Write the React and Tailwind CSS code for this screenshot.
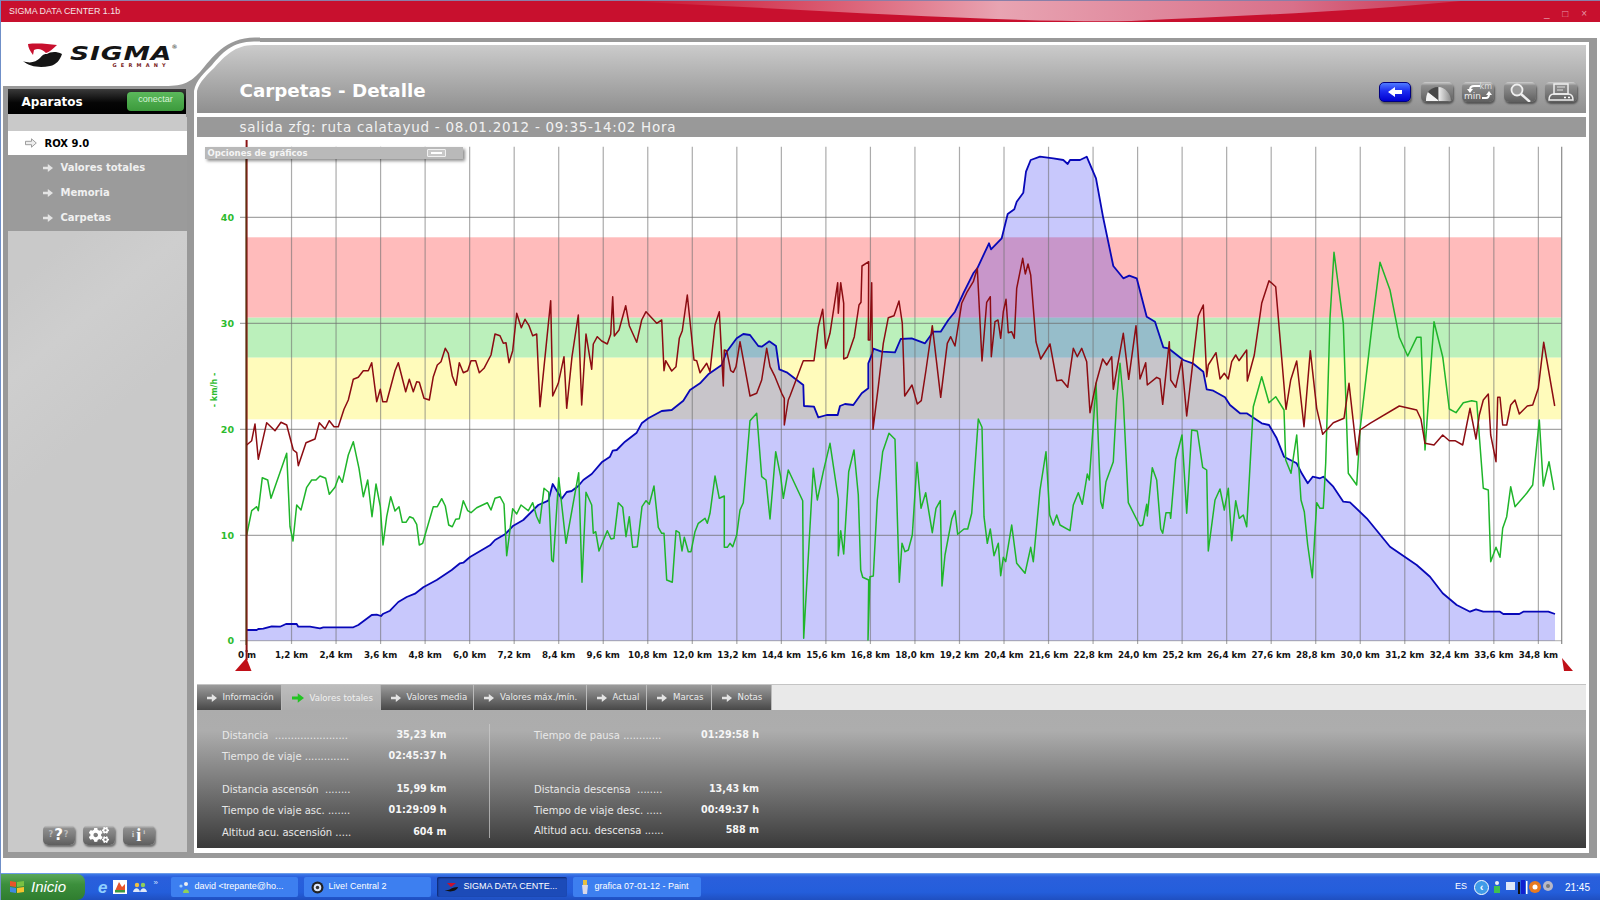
import React from "react";
import { FaCogs } from "react-icons/fa";

const parse = (ox, oy, s) =>
  s.trim().split(/\s+/).map((p) => {
    const [x, y] = p.split(",").map(Number);
    return [ox + x / 3, oy + y / 3];
  });
const toPts = (a) => a.map(([x, y]) => `${x.toFixed(1)},${y.toFixed(1)}`).join(" ");

const blue = [
  ...parse(200, 400, "140,690 170,690 175,687 190,686 215,679 240,680 258,672 290,672 295,680 330,680 360,685 370,682 460,682 475,675 495,660 515,645 530,644 543,648 550,641 570,632 595,606 620,591 645,581 670,562 710,540 755,510 780,490 790,488 810,471 870,436 885,420 915,403 940,377 970,360 1015,315 1045,302 1058,252 1085,296 1100,276 1115,273 1135,258 1150,240 1175,222 1205,187 1230,170 1238,152 1250,150 1275,125 1310,98 1325,70 1345,55 1385,33 1415,30 1450,2"),
  ...parse(690, 140, "0,750 30,730 55,703 95,675 110,635 140,595 160,582 180,585 205,618 215,620 238,604 258,618 268,688 290,697 340,735 342,798 372,800 385,832 410,825 443,825 450,798 465,792 490,795 515,760 535,745 535,670 547,640 550,626 575,635 615,637 632,597 665,595 705,610 730,575 752,575 775,540 795,515 820,460 850,400 862,385 897,310 903,328 935,295 953,222 973,208 980,185 1000,158 1008,95 1022,60 1050,50 1090,55 1120,60 1133,72 1140,60 1170,60 1190,50 1205,85 1218,115 1240,235 1270,378 1300,415 1318,407 1340,415 1370,530 1395,545 1420,622 1435,625 1480,660"),
  ...parse(1120, 230, "218,400 250,425 260,478 280,482 315,502 330,525 360,550 380,550 425,580 447,585 470,625 492,680 530,700"),
  ...parse(1120, 430, "545,130 563,160 578,140 600,145 610,140 640,170 670,215 690,217 740,265 810,350 890,405 930,440 968,490 1010,525 1050,545 1068,538 1090,545 1140,545 1150,552 1198,552 1210,545 1285,545 1305,552"),
];

const green = [
  ...parse(200, 400, "140,405 155,332 170,320 175,332 187,233 203,240 213,295 260,160 270,380 279,423 290,315 303,330 320,262 335,240 348,240 360,228 377,235 388,283 405,262 417,228 427,247 445,165 460,125 477,205 490,290 503,240 516,350 528,252 541,320 549,435 560,350 572,290 585,333 597,320 607,367 618,367 629,350 640,355 650,373 658,435 668,430 678,395 700,320 712,320 725,296 736,318 746,375 757,380 767,358 778,356 790,302 803,332 813,338 830,323 862,308 873,330 885,295 900,290 912,312 920,467 938,326 950,342 963,315 985,332 998,308 1010,350 1019,370 1032,265 1046,277 1055,480 1060,485 1076,233 1098,430 1136,218 1146,547 1158,277 1175,315 1180,400 1187,395 1197,453 1222,392 1233,417 1242,415 1255,308 1268,322 1278,410 1288,350 1298,442 1312,440 1326,320 1338,302 1348,313 1362,258 1375,382 1385,400 1392,400 1400,540 1417,547 1428,392 1438,398 1446,453 1453,412 1465,455 1473,455"),
  ...parse(690, 400, "15,395 25,370 45,355 52,370 60,340 75,228 88,295 103,288 103,442 112,442 120,430 128,440 140,405 150,330 160,308 180,62 200,40 215,230 228,240 240,357 257,155 272,230 280,295 295,210 338,302 341,715 370,205 382,300 400,215 420,130 445,297 445,467 452,392 461,462 476,215 492,150 505,285 512,510 518,532 536,540 534,720 540,530 550,528 562,300 578,155 597,100 615,118 628,547 636,430 645,455 655,450 667,405 681,187 693,325 707,278 727,398 738,325 751,302 756,558 765,465 785,358 795,332 803,403 822,387 833,387 845,340 865,57 876,82 882,350 892,430 901,387 912,467 925,430 932,527 940,472 947,485 965,375 980,490 1005,520 1022,442 1030,485 1050,270 1068,155 1079,345 1090,375 1100,345 1110,375 1140,392 1150,315 1165,278 1177,313 1192,222 1198,240 1215,0 1218,-50 1220,0 1232,305 1238,325 1248,245 1270,185 1280,0 1290,-110 1300,0"),
  ...parse(1120, 430, "25,218 60,288 68,285 80,223 82,258 97,113 110,150 122,297 128,310 138,248 150,248 152,265 167,88 186,15 200,250 215,0 232,3 248,112 260,120 265,363 285,210 300,177 313,240 325,175 335,332 347,212 358,265 370,255 380,290 400,-70 425,-160 447,-82 467,-100 492,-60 497,90 513,130 530,15 543,210 553,245 563,345 577,443 590,218 600,235 610,235 617,100 630,-335 642,-533 670,-320 685,130 710,165 720,0 757,-320 780,-503 810,-420 838,-278 863,-222 890,-278 903,-278 915,60 942,-325 968,-220 988,-63 1008,-52 1030,-82 1055,-88 1070,-85 1090,175 1105,180 1112,395 1128,352 1140,382 1148,295 1160,260 1172,170 1185,230 1220,190 1238,165 1258,-30 1270,168 1287,95 1302,180"),
];

const red = [
  ...parse(200, 400, "140,135 155,122 165,72 175,178 200,68 225,92 243,67 260,75 280,150 290,158 295,197 318,128 345,117 358,68 375,87 388,62 402,80 415,80"),
  ...parse(200, 140, "432,808 445,780 460,718 475,712 490,692 505,692 515,668 530,785 541,748 548,785 560,785 585,692 595,668 617,755 628,718 640,755 650,725 658,727 672,775 688,780 700,710 712,675 723,665 736,625 745,640 757,708 768,736 778,668 790,698 803,692 813,662 827,662 838,698 852,685 873,645 885,582 900,587 910,610 918,608 927,668 938,632 950,520 964,563 975,538 987,557 998,587 1010,582 1020,800 1052,482 1058,768 1075,730 1092,650 1100,805 1116,650 1135,525 1145,795 1158,582 1175,688 1180,612 1192,590 1205,603 1222,612 1232,583 1238,470 1243,588 1257,570 1277,497 1288,557 1310,607 1325,540 1338,515 1370,550 1385,540 1392,692 1397,662 1415,693 1428,680 1438,595 1447,572 1462,465 1482,660 1490,662"),
  ...parse(690, 140, "30,698 50,670 60,695 75,555 88,515 100,738 103,630 110,632 122,692 130,697 138,680 150,605 180,768 200,760 215,720 230,625 240,680 255,710 275,760 283,775 283,855 295,780 300,768 340,662 372,662 385,560 398,508 407,625 420,580 443,428 445,520 452,428 461,490 461,657 472,652 493,590 507,495 513,487 516,378 536,365 535,600 540,600 545,428 549,868 565,740 580,610 595,533 612,527 627,483 637,550 644,768 666,735 682,792 694,782 708,690 727,557 752,772 772,610 782,590 795,618 815,490 830,458 850,425 862,385 876,663 890,487 901,470 904,650 915,545 924,540 932,595 940,515 948,478 955,578 965,575 973,595 980,445 998,355 1006,402 1014,372 1022,405 1038,605 1052,657 1080,612 1100,722 1115,720 1133,742 1150,625 1162,650 1175,625 1190,665 1200,818 1218,730 1238,657 1250,675 1265,650 1270,748 1300,580 1316,718 1338,557 1350,717 1367,668 1372,735 1400,712 1410,717 1418,793 1438,605 1442,720 1457,742 1475,660"),
  ...parse(1120, 230, "200,558 220,385 235,258 250,225 260,440 265,405 288,368 300,447 313,430 325,447 335,395 347,375 357,392 380,360 382,453 403,375 425,220 447,152 467,170 498,538 512,450 530,393 552,590 571,362 590,535 608,613 640,578 672,565 687,460 711,675 720,600 750,580 838,528 890,540 903,568 915,640 942,645 968,615 988,632 1005,632 1028,645 1050,535 1068,627 1078,555 1090,510 1105,492 1112,615 1128,695 1133,502 1140,502 1148,585 1160,585 1172,525 1185,510 1198,552 1222,528 1238,525 1255,475 1271,337 1304,528"),
];

const kmLabels = ["0 m","1,2 km","2,4 km","3,6 km","4,8 km","6,0 km","7,2 km","8,4 km","9,6 km","10,8 km","12,0 km","13,2 km","14,4 km","15,6 km","16,8 km","18,0 km","19,2 km","20,4 km","21,6 km","22,8 km","24,0 km","25,2 km","26,4 km","27,6 km","28,8 km","30,0 km","31,2 km","32,4 km","33,6 km","34,8 km"];
const X0 = 247, XS = 44.53, Y0 = 640.7, RIGHT = 1561.7;
const FONT = "DejaVu Sans, sans-serif";

function Arrow({ className = "w-[10px] h-[8px] text-[#e4e4e4]" }) {
  return (
    <svg viewBox="0 0 10 8" className={className}>
      <path d="M0 2.8h4.8V0L10 4 4.8 8V5.2H0z" fill="currentColor" />
    </svg>
  );
}

function Chart() {
  const yv = [[40, 217.3], [30, 323.3], [20, 429.3], [10, 535.3], [0, 640.7]];
  return (
    <svg viewBox="197 137 1389 547" className="absolute inset-0 w-[1389px] h-[547px]">
      <rect x="247" y="237.3" width={RIGHT - 247} height="80.4" fill="#ffbbbb" />
      <rect x="247" y="317.7" width={RIGHT - 247} height="40" fill="#bbf0bb" />
      <rect x="247" y="357.7" width={RIGHT - 247} height="61.6" fill="#fffbbb" />
      <polygon points={`${blue[0][0]},${Y0} ${toPts(blue)} 1555,${Y0}`} fill="rgb(47,47,245)" fillOpacity=".265" />
      {kmLabels.slice(1).map((_, i) => (
        <line key={i} x1={X0 + XS * (i + 1)} x2={X0 + XS * (i + 1)} y1="146.7" y2="644" stroke="#6e6e6e" strokeOpacity=".58" strokeWidth="1.2" />
      ))}
      <line x1={RIGHT} x2={RIGHT} y1="146.7" y2="644" stroke="#8a8a8a" strokeWidth="1.2" />
      {yv.map(([v, y]) => (
        <g key={v}>
          <line x1="240" x2={RIGHT} y1={y} y2={y} stroke="#6e6e6e" strokeOpacity={v === 0 ? ".45" : ".62"} strokeWidth="1.2" />
          <text x="234" y={y + 3.5} textAnchor="end" fontFamily={FONT} fontWeight="700" fontSize="9.5" fill="#2dbb2d">{v}</text>
        </g>
      ))}
      <polyline points={toPts(blue)} fill="none" stroke="#0808b8" strokeWidth="1.8" strokeLinejoin="round" />
      <polyline points={toPts(green)} fill="none" stroke="#1fb52a" strokeWidth="1.5" strokeLinejoin="round" />
      <polyline points={toPts(red)} fill="none" stroke="#8c0c12" strokeWidth="1.5" strokeLinejoin="round" />
      <line x1="246.6" x2="246.6" y1="140" y2="652" stroke="#8a1414" strokeWidth="2" />
      <line x1="246" x2="246" y1="159" y2="645" stroke="#3a4a10" strokeWidth=".8" />
      <text transform="translate(217 390) rotate(-90)" textAnchor="middle" fontFamily={FONT} fontWeight="700" fontSize="8" fill="#2dbb2d">- km/h -</text>
      {kmLabels.map((l, i) => (
        <text key={l} x={X0 + XS * i} y="657.5" textAnchor="middle" fontFamily={FONT} fontWeight="700" fontSize="8.7" fill="#141414">{l}</text>
      ))}
      <line x1="246.6" x2="246.6" y1="650" y2="660" stroke="#8a1414" strokeWidth="2" />
      <polygon points="246.4,658 251.5,671 235,671" fill="#c01018" />
      <polygon points="1562,658 1573,671 1564,671" fill="#c01018" />
    </svg>
  );
}

const Stat = ({ label, value }) => (
  <div className="flex justify-between h-[21px] items-center whitespace-pre">
    <span className="text-[#e8e8e8]">{label}</span>
    <span className="font-bold text-[9.6px] text-[#f6f6f6]">{value}</span>
  </div>
);

function GrayBtn({ children, w = "w-[32px]" }) {
  return (
    <div className={`${w} h-[20px] rounded-[5px] bg-[linear-gradient(#cfcfcf_0%,#8e8e8e_18%,#7a7a7a_55%,#5e5e5e_100%)] shadow-[1px_2px_2px_rgba(0,0,0,.45)] flex items-center justify-center overflow-hidden relative`}>
      {children}
    </div>
  );
}

const TABS = ["Información", "Valores totales", "Valores media", "Valores máx./mín.", "Actual", "Marcas", "Notas"];
const TABW = ["w-[85px]", "w-[99px]", "w-[93.5px]", "w-[112.5px]", "w-[60.5px]", "w-[64.5px]", "w-[60px]"];

function TaskBtn({ w, dark, icon, children }) {
  return (
    <div className={`${w} h-[20px] rounded-[2px] flex items-center gap-[5px] pl-[7px] text-white text-[9px] whitespace-nowrap overflow-hidden ${dark ? "bg-[#1c4bb8] shadow-[inset_1px_1px_2px_rgba(0,0,30,.5)]" : "bg-[#3d7ff0]"}`}>
      {icon}
      <span>{children}</span>
    </div>
  );
}

export default function App() {
  return (
    <div className="w-[1600px] h-[900px] overflow-hidden flex flex-col bg-white relative [font-family:'DejaVu_Sans',sans-serif] border-l-[1.5px] border-[#6f8fc8]">
      {/* title bar */}
      <div className="h-[22px] shrink-0 bg-[#c8102e] relative overflow-hidden border-t border-[#8a7fa8] flex items-center justify-between pl-[8px] pr-[8px]">
        <svg viewBox="0 0 1600 22" className="absolute inset-0 w-[1600px] h-[22px]">
          <defs>
            <linearGradient id="sw" x1="0" x2="1" y1="0" y2="0">
              <stop offset="0" stopColor="#e8899c" stopOpacity="0" />
              <stop offset=".45" stopColor="#e8a4b2" />
              <stop offset=".8" stopColor="#d8708a" />
              <stop offset="1" stopColor="#c8304e" />
            </linearGradient>
          </defs>
          <path d="M620 0 L1460 0 C1360 10 1240 15 1130 20 C1000 22 800 8 620 0Z" fill="url(#sw)" />
        </svg>
        <span className="relative text-[8.9px] text-[#f4e6e8] [font-family:'Liberation_Sans',sans-serif]">SIGMA DATA CENTER 1.1b</span>
        <span className="relative text-[10px] text-[#e69aa8] tracking-[5px] mt-[3px] [font-family:'Liberation_Sans',sans-serif]">_ □ ×</span>
      </div>

      {/* body */}
      <div className="flex-1 flex relative pb-[15px]">
        {/* left column */}
        <div className="w-[192.5px] shrink-0 flex flex-col">
          <div className="h-[64px] relative">
            <svg viewBox="23 43 40 25" className="absolute left-[21.5px] top-[21px] w-[40px] h-[25px]">
              <path d="M28 44 C38 43 48 44 57 45 C53 49 49 52 46 53 C42 49 38 48 34 50 L33 55 C30 51 28 47 28 44Z" fill="#c8102e" />
              <path d="M23 61 C30 64 36 62 40 58 C43 54 45 54 47 54 C50 52 56 51 62 54 C60 60 56 65 50 66 C40 68 30 67 23 61Z" fill="#151515" />
            </svg>
            <div className="absolute left-[68.5px] top-[19px] text-[19px] leading-[24px] font-bold italic text-[#151515] tracking-[.6px] origin-left scale-x-[1.4]">SIGMA</div>
            <div className="absolute left-[170.5px] top-[22px] text-[6px] leading-[6px] text-[#222]">®</div>
            <div className="absolute left-[111.5px] top-[40px] text-[5px] leading-[6px] font-bold text-[#7a1a20] tracking-[4.2px]">GERMANY</div>
          </div>
          <div className="flex-1 ml-[1.5px] bg-[#999] pl-[5px] pt-[3px] pb-[6px] pr-[6.5px] flex">
            <div className="flex-1 flex flex-col bg-[linear-gradient(140deg,#c9c9c9_0%,#c9c9c9_22%,#cecece_32%,#c9c9c9_45%)]">
              <div className="h-[25px] bg-[linear-gradient(#3a3a3a,#050505_55%,#000)] flex items-center justify-between pl-[14px] pr-[3px]">
                <span className="text-white font-bold text-[12px]">Aparatos</span>
                <div className="w-[57px] h-[19px] rounded-[4px] bg-[linear-gradient(#5bb85b,#3c9a3c)] shadow-[0_1px_2px_rgba(0,0,0,.6)] text-center text-[#d8f4d8] text-[9px] leading-[14px] [font-family:'Liberation_Sans',sans-serif]">conectar</div>
              </div>
              <div className="h-[17px]" />
              <div className="h-[24px] bg-white flex items-center pl-[17px] gap-[8px] text-[10px] font-bold text-black">
                <svg viewBox="0 0 12 10" className="w-[12px] h-[10px]">
                  <path d="M.5 3.3h6V.8L11.3 5 6.5 9.2V6.7h-6z" fill="#eee" stroke="#888" strokeWidth=".8" />
                </svg>
                ROX 9.0
              </div>
              <div className="h-[76px] bg-[#9b9b9b] flex flex-col">
                {["Valores totales", "Memoria", "Carpetas"].map((t) => (
                  <div key={t} className="h-[25px] flex items-center pl-[35px] gap-[8px] text-[10px] font-bold text-[#f0f0f0]">
                    <Arrow />
                    {t}
                  </div>
                ))}
              </div>
              <div className="flex-1" />
              <div className="flex pl-[35px] gap-[8px] pb-[7px]">
                <GrayBtn>
                  <span className="text-[#bbb] text-[8px] font-bold mr-[1px]">?</span>
                  <span className="text-white text-[15px] font-bold leading-none">?</span>
                  <span className="text-[#bbb] text-[8px] font-bold ml-[1px]">?</span>
                </GrayBtn>
                <GrayBtn>
                  <FaCogs className="text-white w-[22px] h-[16px]" />
                </GrayBtn>
                <GrayBtn>
                  <span className="text-[#ccc] text-[9px] font-bold mr-[2px] [font-family:'Liberation_Serif',serif]">i</span>
                  <span className="text-white text-[18px] font-bold leading-none [font-family:'Liberation_Serif',serif]">i</span>
                  <span className="text-[#ccc] text-[7px] font-bold ml-[2px] -mt-[6px] [font-family:'Liberation_Serif',serif]">i</span>
                </GrayBtn>
              </div>
            </div>
          </div>
        </div>

        {/* main column */}
        <div className="flex-1 mt-[16px] mr-[3px] border-t-[4px] border-r-[8px] border-b-[5px] border-[#999] bg-white pt-[3px] pr-[3px] pb-[5px] pl-[3px] flex flex-col">
          <div className="h-[68px] bg-[linear-gradient(#cbcbcb,#8f8f8f)] flex items-end justify-between relative pr-[9px] pb-[11px] pl-[43px]">
            <div className="relative z-10 text-white font-bold text-[18.3px] leading-[24px] mb-[-1px]">Carpetas - Detalle</div>
            <div className="flex gap-[9.5px]">
              <div className="w-[32px] h-[20px] rounded-[5px] border border-[#000080] bg-[linear-gradient(#4f7bff,#1c2cf0_45%,#0000d0)] shadow-[1px_2px_2px_rgba(0,0,0,.4)] flex items-center justify-center">
                <svg viewBox="0 0 14 10" className="w-[14px] h-[10px] rotate-180"><path d="M0 3h7V0l7 5-7 5V7H0z" fill="#fff" /></svg>
              </div>
              <GrayBtn>
                <svg viewBox="0 0 32 20" className="w-[32px] h-[20px]">
                  <defs>
                    <linearGradient id="pie" x1="0" x2="1" y1="0" y2="0">
                      <stop offset="0" stopColor="#ececec" />
                      <stop offset="1" stopColor="#8e8e8e" />
                    </linearGradient>
                  </defs>
                  <path d="M5 19 C5 14 6 12 7 10 L17 18 V19Z" fill="#f4f4f4" />
                  <path d="M7 10 C9 7 13 5 17.5 5 V18Z" fill="#484848" />
                  <path d="M17.5 5 C24 5 30 12 30 19 H17.5Z" fill="url(#pie)" />
                </svg>
              </GrayBtn>
              <GrayBtn>
                <span className="absolute right-[2px] top-[0px] text-[8px] leading-[9px] text-[#ddd]">km</span>
                <span className="absolute left-[2px] bottom-[1px] text-[9px] leading-[9px] text-[#eee]">min</span>
                <svg viewBox="0 0 32 20" className="absolute inset-0 w-[32px] h-[20px]">
                  <path d="M18 4 H12 C9 4 8 6 8 8" fill="none" stroke="#fff" strokeWidth="2" />
                  <path d="M5 7 H11 L8 11Z" fill="#fff" />
                  <path d="M20 16 H24 C27 16 27 14 27 12" fill="none" stroke="#fff" strokeWidth="2" />
                  <path d="M24 13 H30 L27 9Z" fill="#fff" />
                </svg>
              </GrayBtn>
              <GrayBtn>
                <svg viewBox="0 0 32 20" className="w-[32px] h-[20px]">
                  <circle cx="13" cy="8" r="5.5" fill="#9a9a9a" stroke="#eee" strokeWidth="1.8" />
                  <path d="M17 12 L26 20" stroke="#eee" strokeWidth="2.5" />
                </svg>
              </GrayBtn>
              <GrayBtn>
                <svg viewBox="0 0 32 20" className="w-[32px] h-[20px]">
                  <path d="M9 2 H23 V12 H9Z" fill="none" stroke="#eee" strokeWidth="1.5" />
                  <path d="M12 5 H20 M12 8 H18" stroke="#ddd" strokeWidth="1.2" />
                  <path d="M4 18 C4 14 6 12 9 12 H23 C26 12 28 14 28 18Z" fill="none" stroke="#eee" strokeWidth="1.5" />
                  <path d="M19 15.5 H21 M23 15.5 H25" stroke="#fff" strokeWidth="1.5" />
                </svg>
              </GrayBtn>
            </div>
          </div>
          <div className="h-[4px]" />
          <div className="h-[20px] bg-[#999] pl-[43px] flex items-center text-[13.5px] text-[#f2f2f2] tracking-[.72px] whitespace-nowrap">
            salida zfg: ruta calatayud - 08.01.2012 - 09:35-14:02 Hora
          </div>
          <div className="h-[547px] relative bg-white">
            <Chart />
            <div className="absolute left-[8px] top-[10px] w-[258px] h-[12px] bg-[#b9b9b9] shadow-[2px_2px_3px_rgba(0,0,0,.45)] flex items-center justify-between pl-[3px] pr-[17px]">
              <span className="text-[8.5px] font-bold text-[#f4f4f4]">Opciones de gráficos</span>
              <span className="w-[19px] h-[8px] rounded-[1px] bg-[#c8c8c8] border border-[#f0f0f0] flex items-center justify-center"><span className="w-[11px] h-[1.5px] bg-white" /></span>
            </div>
          </div>
          <div className="h-[26px] bg-[#e9e9e9] border-t border-[#c4c4c4] flex">
            {TABS.map((t, i) => (
              <div key={t} className={`${TABW[i]} flex items-center gap-[6px] pl-[10px] text-[8.6px] whitespace-nowrap ${i === 1 ? "bg-[linear-gradient(#bdbdbd,#adadad)] text-[#f0f0f0] pt-[1px] border-r border-[#b0b0b0]" : "bg-[linear-gradient(#9c9c9c,#484848)] text-[#ececec] border-r border-[#bbb]"}`}>
                <Arrow className={i === 1 ? "w-[12px] h-[10px] text-[#22c422]" : "w-[10px] h-[8px] text-[#e4e4e4]"} />
                {t}
              </div>
            ))}
          </div>
          <div className="h-[138px] bg-[linear-gradient(#acacac_0%,#adadad_15%,#3a3a3a_100%)] flex text-[10px] pt-[15px] pl-[25.5px] relative">
            <div className="w-[224.5px]">
              <Stat label="Distancia  ......................." value="35,23 km" />
              <Stat label="Tiempo de viaje .............." value="02:45:37 h" />
              <div className="h-[12px]" />
              <Stat label="Distancia ascensón  ........" value="15,99 km" />
              <Stat label="Tiempo de viaje asc. ......." value="01:29:09 h" />
              <div className="mt-[1px]"><Stat label="Altitud acu. ascensión ....." value="604 m" /></div>
            </div>
            <div className="w-[1px] h-[114px] bg-[#ccc] opacity-70 ml-[42.5px] mr-[44px] mt-[-1px]" />
            <div className="w-[225px]">
              <Stat label="Tiempo de pausa ............" value="01:29:58 h" />
              <div className="h-[21px]" />
              <div className="h-[12px]" />
              <Stat label="Distancia descensa  ........" value="13,43 km" />
              <Stat label="Tiempo de viaje desc. ....." value="00:49:37 h" />
              <div className="-mt-[1px]"><Stat label="Altitud acu. descensa ......" value="588 m" /></div>
            </div>
          </div>
        </div>

        {/* curved corner of the main panel */}
        <svg viewBox="165 22 95 95" className="absolute left-[163.5px] top-0 w-[95px] h-[95px] pointer-events-none">
          <defs>
            <linearGradient id="hd" gradientUnits="userSpaceOnUse" x1="0" x2="0" y1="45" y2="113">
              <stop offset="0" stopColor="#cbcbcb" />
              <stop offset="1" stopColor="#8f8f8f" />
            </linearGradient>
          </defs>
          <rect x="186" y="30" width="74" height="56" fill="#fff" />
          <path d="M165 86 C185 86 190 82 200 72 C212 58 225 37.5 255 37.5 H260 V117 H186 V89 H165Z" fill="#999" />
          <path d="M194 117 V91 C196 80 205 72 212 65 C222 53 232 41.5 254 41.5 H260 V117Z" fill="#fff" />
          <path d="M197 113 V91 C199 82 208 74 214 68 C225 56 235 45 254 45 H260 V113Z" fill="url(#hd)" />
        </svg>
      </div>

      {/* taskbar */}
      <div className="h-[27px] shrink-0 bg-[linear-gradient(#3f7ae8_0%,#2a5fdc_12%,#245edb_70%,#1f4fc0_100%)] border-t border-[#6b9be8] flex items-center text-[10px] [font-family:'Liberation_Sans',sans-serif]">
        <div className="w-[84px] h-full rounded-r-[8px] bg-[linear-gradient(#5aa85a,#3c8f3c_40%,#2f7d2f)] flex items-center pl-[8px] gap-[6px] text-white italic text-[15px]">
          <svg viewBox="0 0 16 16" className="w-[16px] h-[16px]">
            <path d="M1 2 L7 3 V8 L1 7Z" fill="#e8542a" />
            <path d="M8 3 L15 2 V7 L8 8Z" fill="#7ac142" />
            <path d="M1 8 L7 9 V14 L1 13Z" fill="#3f8ae0" />
            <path d="M8 9 L15 8 V13 L8 14Z" fill="#f6c42e" />
          </svg>
          Inicio
        </div>
        <div className="w-[85.5px] flex items-center gap-[6px] pl-[13px] text-white">
          <span className="text-[#8fd0ff] text-[17px] italic font-bold leading-none">e</span>
          <svg viewBox="0 0 14 14" className="w-[14px] h-[14px]">
            <rect width="14" height="14" fill="#fff" />
            <path d="M2 11 L6 2 L9 7 L12 4 V12 H2Z" fill="#e8542a" />
            <rect x="2" y="10" width="10" height="2.5" fill="#3c9a3c" />
          </svg>
          <svg viewBox="0 0 14 12" className="w-[14px] h-[12px]">
            <circle cx="4" cy="4" r="2.2" fill="#f0c040" />
            <circle cx="10" cy="4" r="2.2" fill="#8fd05a" />
            <path d="M0 11 C1 6 6 6 7 11 C8 6 13 6 14 11Z" fill="#dfe8f8" />
          </svg>
          <span className="text-[8px] -mt-[8px] text-[#cfe0ff]">»</span>
        </div>
        <div className="flex gap-[6px]">
          <TaskBtn w="w-[127px]" icon={<svg viewBox="0 0 12 12" className="w-[12px] h-[12px]"><circle cx="8" cy="3" r="2" fill="#f0f0f0" /><path d="M5 12 C5 7 11 7 11 12Z" fill="#8fd05a" /><circle cx="3" cy="5" r="1.6" fill="#9fd0ff" /></svg>}>david &lt;trepante@ho...</TaskBtn>
          <TaskBtn w="w-[127px]" icon={<svg viewBox="0 0 12 12" className="w-[13px] h-[13px]"><circle cx="6" cy="6" r="5.5" fill="#222" /><circle cx="6" cy="6" r="3.5" fill="#dfe8f8" /><circle cx="6" cy="6" r="1.6" fill="#333" /></svg>}>Live! Central 2</TaskBtn>
          <TaskBtn w="w-[130px]" dark icon={<svg viewBox="0 0 14 10" className="w-[14px] h-[10px] ml-[1px]"><path d="M2 1 H11 L6 5Z" fill="#c8102e" /><path d="M0 8 C5 9 6 5 13 5 C12 9 5 11 0 8Z" fill="#111" /></svg>}>SIGMA DATA CENTE...</TaskBtn>
          <TaskBtn w="w-[128px]" icon={<svg viewBox="0 0 10 14" className="w-[10px] h-[14px]"><path d="M3 0 H7 V5 H3Z" fill="#e8c040" /><path d="M2 5 H8 L7 14 H3Z" fill="#d8d8e8" /></svg>}>grafica 07-01-12 - Paint</TaskBtn>
        </div>
        <div className="flex-1" />
        <div className="flex items-center gap-[3px] pr-[10px] text-white">
          <span className="mr-[4px] text-[9px]">ES</span>
          <span className="w-[15px] h-[15px] rounded-full bg-[#3f9be8] border border-white flex items-center justify-center text-[11px] leading-none font-bold">‹</span>
          <svg viewBox="0 0 62 16" className="w-[62px] h-[16px]">
            <circle cx="5" cy="4" r="2" fill="#f0f0f0" /><rect x="2" y="7" width="6" height="7" fill="#40c050" />
            <rect x="14" y="3" width="9" height="8" fill="#dfe8f8" /><rect x="26" y="3" width="2" height="12" fill="#111" />
            <rect x="29" y="1" width="4" height="14" fill="#1020d0" /><rect x="34" y="2" width="1.5" height="13" fill="#fff" />
            <circle cx="43" cy="8" r="6" fill="#e87a20" /><circle cx="43" cy="8" r="2.5" fill="#fff" />
            <circle cx="56" cy="7" r="5" fill="#b8b8c8" /><circle cx="56" cy="7" r="2" fill="#777" />
          </svg>
          <span className="ml-[8px]">21:45</span>
        </div>
      </div>
    </div>
  );
}
